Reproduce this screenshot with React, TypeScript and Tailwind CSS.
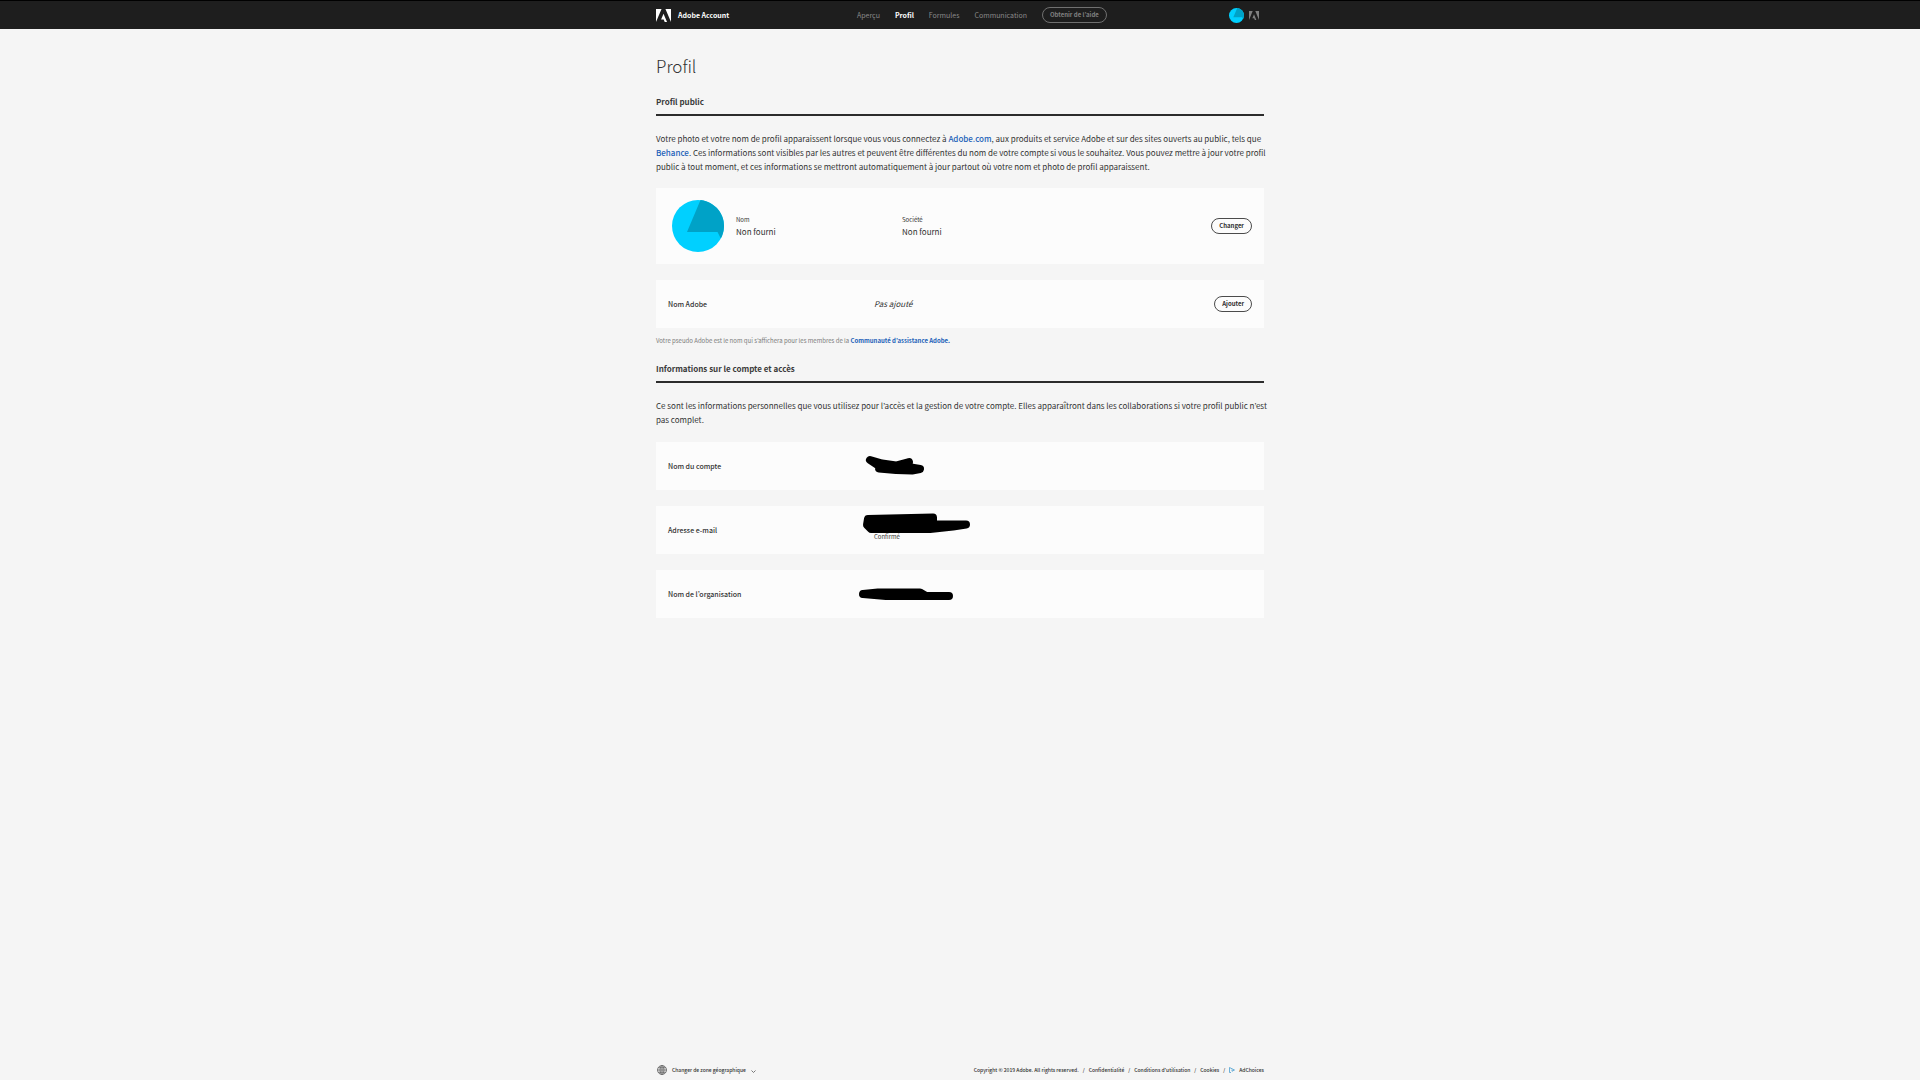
import type { ReactNode } from 'react';

const NAV = [
  { label: 'Aperçu', active: false },
  { label: 'Profil', active: true },
  { label: 'Formules', active: false },
  { label: 'Communication', active: false },
];

const LEGAL = ['Confidentialité', 'Conditions d’utilisation', 'Cookies'];

function AdobeMark({ className }: { className: string }) {
  return (
    <svg viewBox="0 1.376 24 21.248" preserveAspectRatio="none" fill="currentColor" className={className} aria-hidden="true">
      <path d="M13.966 22.624l-1.69-4.281H8.122l3.892-9.144 5.662 13.425zM8.884 1.376H0v21.248zm6.232 0H24v21.248z" />
    </svg>
  );
}

function Avatar({ className }: { className: string }) {
  return (
    <svg viewBox="0 0 52 52" className={className} aria-hidden="true">
      <circle cx="26" cy="26" r="26" fill="#00d0ff" />
      <path d="M28.5 0.1A26 26 0 0 1 48.8 38.5L45.5 32H15z" fill="#00a2c7" />
    </svg>
  );
}

// Marker strokes hiding the private values
function Scribble({ className, viewBox, children }: { className: string; viewBox: string; children: ReactNode }) {
  return (
    <svg viewBox={viewBox} className={className} fill="#000" stroke="#000" strokeWidth="8" strokeLinecap="round" strokeLinejoin="round" aria-hidden="true">
      {children}
    </svg>
  );
}

function PillButton({ children }: { children: ReactNode }) {
  return (
    <button type="button" className="h-4 rounded-full border border-[#4b4b4b] px-[7px] text-[6px] leading-3 font-bold text-[#2c2c2c]">
      {children}
    </button>
  );
}

function SectionTitle({ children }: { children: ReactNode }) {
  return (
    <h2 className="border-b-2 border-[#2c2c2c] pb-[6px] text-[8px] leading-3 font-bold text-[#3a3a3a]">{children}</h2>
  );
}

function InfoRow({ label, children, action }: { label: string; children: ReactNode; action?: ReactNode }) {
  return (
    <div className="flex h-12 items-center bg-[#fcfcfc] px-3">
      <div className="w-[192px] shrink-0 text-[7px] leading-3 font-medium">{label}</div>
      <div className="relative h-12 flex-1 pl-[14px] text-[8px]">{children}</div>
      {action}
    </div>
  );
}

export default function App() {
  return (
    <div className="flex min-h-screen flex-col bg-[#f5f5f5] font-['Noto_Sans_CJK_JP','Noto_Sans',sans-serif] text-[#323232]">
      <header className="border-t border-black bg-[#1e1e1e]">
        <div className="mx-auto flex h-7 w-full max-w-[608px] items-center">
          <a href="#" className="flex w-[201px] items-center gap-[7px] text-[7px] font-bold text-white">
            <AdobeMark className="h-[13px] w-[15px]" />
            Adobe Account
          </a>
          <nav className="flex items-center gap-[15px] text-[7px]">
            {NAV.map(n => (
              <a key={n.label} href="#" className={n.active ? 'font-bold text-white' : 'text-[#8a8a8a]'}>
                {n.label}
              </a>
            ))}
            <button type="button" className="h-4 rounded-full border border-[#707070] px-[7px] text-[6px] leading-3 font-bold text-[#808080]">
              Obtenir de l’aide
            </button>
          </nav>
          <div className="ml-auto flex items-center gap-[5px] pr-[5px]">
            <Avatar className="h-[15px] w-[15px]" />
            <AdobeMark className="h-[9px] w-[10px] text-[#808080]" />
          </div>
        </div>
      </header>

      <main className="mx-auto w-full max-w-[608px] flex-1">
        <h1 className="pt-[25px] text-[17px] leading-6 font-light">Profil</h1>

        <section className="pt-[18px]">
          <SectionTitle>Profil public</SectionTitle>
          <p className="-mr-3 pt-4 text-[8px] leading-[14px]">
            Votre photo et votre nom de profil apparaissent lorsque vous vous connectez à{' '}
            <a href="#" className="font-medium text-[#1a5fb8]">Adobe.com</a>, aux produits et service Adobe et sur des
            sites ouverts au public, tels que{' '}
            <a href="#" className="font-medium text-[#1a5fb8]">Behance</a>. Ces informations sont visibles par les autres
            et peuvent être différentes du nom de votre compte si vous le souhaitez. Vous pouvez mettre à jour votre profil
            public à tout moment, et ces informations se mettront automatiquement à jour partout où votre nom et photo de
            profil apparaissent.
          </p>

          <div className="mt-[14px] flex h-[76px] items-center bg-[#fcfcfc] pr-3 pl-4">
            <Avatar className="h-[52px] w-[52px]" />
            <dl className="ml-3 w-[166px]">
              <dt className="text-[6px] leading-3">Nom</dt>
              <dd className="text-[8px] leading-3">Non fourni</dd>
            </dl>
            <dl className="flex-1">
              <dt className="text-[6px] leading-3">Société</dt>
              <dd className="text-[8px] leading-3">Non fourni</dd>
            </dl>
            <PillButton>Changer</PillButton>
          </div>

          <div className="mt-4">
            <InfoRow label="Nom Adobe" action={<PillButton>Ajouter</PillButton>}>
              <p className="leading-[48px] italic">Pas ajouté</p>
            </InfoRow>
          </div>
          <p className="pt-[7px] text-[6px] leading-3 text-[#7a7a7a]">
            Votre pseudo Adobe est le nom qui s’affichera pour les membres de la{' '}
            <a href="#" className="font-bold text-[#1a5fb8]">Communauté d’assistance Adobe.</a>
          </p>
        </section>

        <section className="pt-4">
          <SectionTitle>Informations sur le compte et accès</SectionTitle>
          <p className="-mr-3 pt-4 text-[8px] leading-[14px]">
            Ce sont les informations personnelles que vous utilisez pour l’accès et la gestion de votre compte. Elles
            apparaîtront dans les collaborations si votre profil public n’est pas complet.
          </p>

          <div className="flex flex-col gap-4 pt-[15px]">
            <InfoRow label="Nom du compte">
              <Scribble viewBox="864 454 62 22" className="absolute top-3 left-1 h-[22px] w-[62px]">
                <path d="M870 460L882 463.5L896 465.5L909 462L908 467L920 469L912 470.5L896 470L879 468.5V466z" />
              </Scribble>
            </InfoRow>
            <InfoRow label="Adresse e-mail">
              <Scribble viewBox="860 510 114 26" className="absolute top-1 left-0 h-[26px] w-[114px]">
                <path d="M868 519L933 517.5V524.5H966L953 526.5L930 529H871L867 525z" />
              </Scribble>
              <p className="pt-[25px] text-[6px] leading-3">Confirmé</p>
            </InfoRow>
            <InfoRow label="Nom de l’organisation">
              <Scribble viewBox="856 584 100 20" className="absolute top-[14px] -left-1 h-5 w-[100px]">
                <path d="M863 594L878 592.5H920L926 596H949H886z" />
              </Scribble>
            </InfoRow>
          </div>
        </section>
      </main>

      <footer className="mx-auto flex w-full max-w-[608px] items-center justify-between pb-1 text-[5px] leading-3 font-medium">
        <button type="button" className="flex items-center gap-[5px] pl-px">
          <svg viewBox="0 0 20 20" fill="none" stroke="#6a6a6a" strokeWidth="1.8" className="h-[10px] w-[10px]" aria-hidden="true">
            <circle cx="10" cy="10" r="9" />
            <ellipse cx="10" cy="10" rx="4" ry="9" />
            <path d="M10 1V19M1 10H19M2.5 5.5H17.5M2.5 14.5H17.5" />
          </svg>
          Changer de zone géographique
          <svg viewBox="0 0 10 6" fill="none" stroke="#6a6a6a" strokeWidth="1.8" className="mt-0.5 h-[3px] w-[5px]" aria-hidden="true">
            <path d="M1 1L5 5L9 1" />
          </svg>
        </button>
        <div className="flex items-center gap-1">
          <span>Copyright © 2019 Adobe. All rights reserved.</span>
          {LEGAL.map(l => (
            <span key={l} className="flex gap-1">
              <span>/</span>
              <a href="#">{l}</a>
            </span>
          ))}
          <span>/</span>
          <a href="#" className="flex items-center gap-1">
            <svg viewBox="0 0 12 12" fill="none" stroke="#4a9fd0" strokeWidth="1.6" className="h-[6px] w-[6px]" aria-hidden="true">
              <path d="M4 11L1 11V1L11 6L6 8.5V5" />
            </svg>
            AdChoices
          </a>
        </div>
      </footer>
    </div>
  );
}
